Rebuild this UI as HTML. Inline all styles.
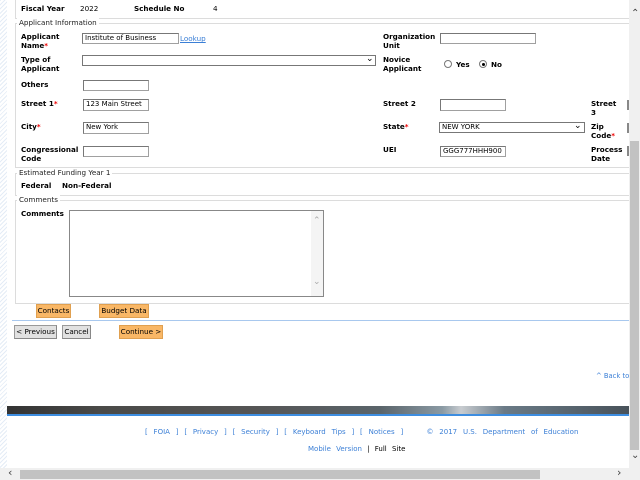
<!DOCTYPE html>
<html><head><meta charset="utf-8"><style>
*{margin:0;padding:0;box-sizing:border-box}
body{width:640px;height:480px;overflow:hidden;position:relative;background:#fff;font-family:"DejaVu Sans","Liberation Sans",sans-serif;font-size:7.2px;color:#000}
.a{position:absolute;white-space:nowrap;line-height:9px}
.b{font-weight:bold}
.r{color:#e00}
.in{position:absolute;border:1px solid #a0a0a0;border-top-color:#777;border-left-color:#777;background:#fff;font-size:7px;line-height:9px;padding-left:2px;white-space:nowrap}
.hl{position:absolute;height:1px;background:#dcdcdc}
.vl{position:absolute;width:1px;background:#dcdcdc}
.leg{position:absolute;background:#fff;padding:0 2px;font-size:7.2px;line-height:9px;color:#222}
.btn{position:absolute;font-size:7.2px;line-height:12px;text-align:center;white-space:nowrap;border:1px solid #999;border-right-color:#888;border-bottom-color:#888}
.or{background:#f9b766;border-color:#e0a050}
.gr{background:#e1e1e1}
.lk{color:#3b7fd6}
.rad{position:absolute;width:8px;height:8px;border:1px solid #777;border-radius:50%;background:#fff}
</style></head><body>
<div style="position:absolute;left:0;top:0;width:7px;height:468px;background:repeating-linear-gradient(135deg,#e4ecf6 0 1px,#fff 1px 3px)"></div>
<div style="position:absolute;left:629px;top:0;width:1px;height:468px;background:#dde"></div>

<div class="a b" style="left:21px;top:4px">Fiscal Year</div>
<div class="a" style="left:80px;top:4px">2022</div>
<div class="a b" style="left:134px;top:4px">Schedule No</div>
<div class="a" style="left:213px;top:4px">4</div>
<div class="vl" style="left:15px;top:0;height:18px"></div>
<div class="hl" style="left:15px;top:18px;width:614px"></div>

<div class="hl" style="left:15px;top:23px;width:614px"></div>
<div class="vl" style="left:15px;top:23px;height:144px"></div>
<div class="hl" style="left:15px;top:167px;width:614px"></div>
<div class="leg" style="left:17px;top:18px">Applicant Information</div>

<div class="a b" style="left:21px;top:32px">Applicant<br>Name<span class="r">*</span></div>
<div class="in" style="left:82px;top:33px;width:97px;height:11px">Institute of Business</div>
<div class="a lk" style="left:180px;top:34px;text-decoration:underline">Lookup</div>
<div class="a b" style="left:383px;top:32px">Organization<br>Unit</div>
<div class="in" style="left:440px;top:33px;width:96px;height:11px"></div>

<div class="a b" style="left:21px;top:55px">Type of<br>Applicant</div>
<div class="in" style="left:82px;top:55px;width:294px;height:11px;border-color:#777"></div>
<div class="a" style="left:366px;top:55px;font-size:9px">&#8964;</div>
<div class="a b" style="left:383px;top:55px">Novice<br>Applicant</div>
<div class="rad" style="left:444px;top:60px"></div>
<div class="a b" style="left:456px;top:60px">Yes</div>
<div class="rad" style="left:479px;top:60px"></div>
<div style="position:absolute;left:482px;top:63px;width:3px;height:3px;border-radius:50%;background:#000"></div>
<div class="a b" style="left:491px;top:60px">No</div>

<div class="a b" style="left:21px;top:80px">Others</div>
<div class="in" style="left:83px;top:80px;width:66px;height:11px"></div>

<div class="a b" style="left:21px;top:99px">Street 1<span class="r">*</span></div>
<div class="in" style="left:83px;top:99px;width:66px;height:12px">123 Main Street</div>
<div class="a b" style="left:383px;top:99px">Street 2</div>
<div class="in" style="left:440px;top:99px;width:66px;height:12px"></div>
<div class="a b" style="left:591px;top:99px">Street<br>3</div>
<div style="position:absolute;left:627px;top:100px;width:2px;height:10px;background:#888"></div>

<div class="a b" style="left:21px;top:122px">City<span class="r">*</span></div>
<div class="in" style="left:83px;top:122px;width:66px;height:12px">New York</div>
<div class="a b" style="left:383px;top:122px">State<span class="r">*</span></div>
<div class="in" style="left:439px;top:122px;width:146px;height:11px;border-color:#777">NEW YORK</div>
<div class="a" style="left:574px;top:122px;font-size:9px">&#8964;</div>
<div class="a b" style="left:591px;top:122px">Zip<br>Code<span class="r">*</span></div>
<div style="position:absolute;left:627px;top:123px;width:2px;height:10px;background:#888"></div>

<div class="a b" style="left:21px;top:145px">Congressional<br>Code</div>
<div class="in" style="left:83px;top:146px;width:66px;height:11px"></div>
<div class="a b" style="left:383px;top:145px">UEI</div>
<div class="in" style="left:440px;top:146px;width:66px;height:11px">GGG777HHH900</div>
<div class="a b" style="left:591px;top:145px">Process<br>Date</div>
<div style="position:absolute;left:627px;top:146px;width:2px;height:10px;background:#888"></div>

<div class="hl" style="left:15px;top:173px;width:614px"></div>
<div class="vl" style="left:15px;top:173px;height:22px"></div>
<div class="hl" style="left:15px;top:195px;width:614px"></div>
<div class="leg" style="left:17px;top:168px">Estimated Funding Year 1</div>
<div class="a b" style="left:21px;top:181px">Federal</div>
<div class="a b" style="left:62px;top:181px">Non-Federal</div>

<div class="hl" style="left:15px;top:200px;width:614px"></div>
<div class="vl" style="left:15px;top:200px;height:103px"></div>
<div class="hl" style="left:15px;top:303px;width:614px"></div>
<div class="leg" style="left:17px;top:195px">Comments</div>
<div class="a b" style="left:21px;top:209px">Comments</div>
<div class="in" style="left:69px;top:210px;width:255px;height:87px;border-color:#888"></div>
<div style="position:absolute;left:311px;top:211px;width:12px;height:85px;background:#f4f4f4"></div>
<div class="a" style="left:313px;top:217px;color:#aaa;font-size:9px">&#8963;</div>
<div class="a" style="left:313px;top:278px;color:#aaa;font-size:9px">&#8964;</div>

<div class="btn or" style="left:36px;top:304px;width:35px;height:14px">Contacts</div>
<div class="btn or" style="left:99px;top:304px;width:50px;height:14px">Budget Data</div>
<div style="position:absolute;left:12px;top:320px;width:617px;height:1px;background:#a8c8ee"></div>
<div class="btn gr" style="left:14px;top:325px;width:43px;height:14px">&lt; Previous</div>
<div class="btn gr" style="left:62px;top:325px;width:29px;height:14px">Cancel</div>
<div class="btn or" style="left:119px;top:325px;width:44px;height:14px">Continue &gt;</div>

<div class="a lk" style="left:596px;top:372px;font-size:6.8px">^ Back to T</div>

<div style="position:absolute;left:7px;top:406px;width:622px;height:8px;background:linear-gradient(90deg,#333 0%,#4a4a48 15%,#555 40%,#5a646a 60%,#8a9aa4 70%,#c8ccd0 73%,#6a7a86 80%,#48525a 100%)"></div>
<div style="position:absolute;left:7px;top:414px;width:622px;height:2px;background:#3d8de0"></div>

<div class="a lk" style="left:145px;top:428px;word-spacing:3.6px;font-size:7px">[ FOIA ] [ Privacy ] [ Security ] [ Keyboard Tips ] [ Notices ] &nbsp;&nbsp; © 2017 U.S. Department of Education</div>
<div class="a" style="left:308px;top:445px;word-spacing:3px;font-size:7px"><span class="lk">Mobile Version</span> | Full Site</div>

<div style="position:absolute;left:629px;top:0;width:11px;height:468px;background:#f0f0f0"></div>
<div style="position:absolute;left:630px;top:141px;width:9px;height:309px;background:#c2c2c2"></div>
<div class="a" style="left:631px;top:9px;font-size:10px;color:#444">&#8963;</div>
<div class="a" style="left:631px;top:451px;font-size:10px;color:#444">&#8964;</div>
<div style="position:absolute;left:0;top:468px;width:629px;height:12px;background:#f0f0f0"></div>
<div style="position:absolute;left:20px;top:470px;width:520px;height:9px;background:#c2c2c2"></div>
<div class="a" style="left:8px;top:468px;font-size:11px;color:#444">&#8249;</div>
<div class="a" style="left:617px;top:468px;font-size:11px;color:#444">&#8250;</div>
<div style="position:absolute;left:629px;top:468px;width:11px;height:12px;background:#f0f0f0"></div>
</body></html>
